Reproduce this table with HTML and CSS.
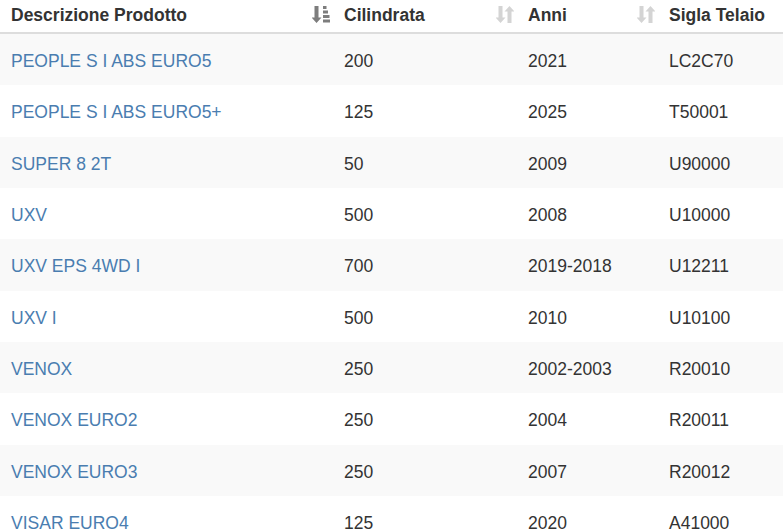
FILE: index.html
```html
<!DOCTYPE html>
<html lang="it">
<head>
<meta charset="utf-8">
<title>Prodotti</title>
<link rel="stylesheet" href="styles.css">
</head>
<body>
<table class="grid">
  <colgroup>
    <col class="c1"><col class="c2"><col class="c3"><col class="c4">
  </colgroup>
  <thead>
    <tr>
      <th><div class="th-in"><span>Descrizione Prodotto</span>
        <svg class="sort active" width="18" height="19" viewBox="0 0 18 19"><path d="M2.5 1h4v11.5h3l-5 5.5-5-5.5h3z" fill="#7d7d7d"/><rect x="11" y="1" width="3.5" height="3" fill="#7d7d7d"/><rect x="11" y="5.5" width="5" height="3" fill="#7d7d7d"/><rect x="11" y="10" width="6.5" height="3" fill="#7d7d7d"/><rect x="11" y="14.5" width="7" height="3" fill="#7d7d7d"/></svg>
      </div></th>
      <th><div class="th-in"><span>Cilindrata</span>
        <svg class="sort" width="18" height="19" viewBox="0 0 18 19"><path d="M2.5 1h4v11.5h3l-5 5.5-5-5.5h3z" fill="#d4d4d4"/><path d="M11.5 18h4V6.5h3l-5-5.5-5 5.5h3z" fill="#d4d4d4"/></svg>
      </div></th>
      <th><div class="th-in"><span>Anni</span>
        <svg class="sort" width="18" height="19" viewBox="0 0 18 19"><path d="M2.5 1h4v11.5h3l-5 5.5-5-5.5h3z" fill="#d4d4d4"/><path d="M11.5 18h4V6.5h3l-5-5.5-5 5.5h3z" fill="#d4d4d4"/></svg>
      </div></th>
      <th><div class="th-in"><span>Sigla Telaio</span></div></th>
    </tr>
  </thead>
  <tbody>
    <tr><td><a href="#">PEOPLE S I ABS EURO5</a></td><td>200</td><td>2021</td><td>LC2C70</td></tr>
    <tr><td><a href="#">PEOPLE S I ABS EURO5+</a></td><td>125</td><td>2025</td><td>T50001</td></tr>
    <tr><td><a href="#">SUPER 8 2T</a></td><td>50</td><td>2009</td><td>U90000</td></tr>
    <tr><td><a href="#">UXV</a></td><td>500</td><td>2008</td><td>U10000</td></tr>
    <tr><td><a href="#">UXV EPS 4WD I</a></td><td>700</td><td>2019-2018</td><td>U12211</td></tr>
    <tr><td><a href="#">UXV I</a></td><td>500</td><td>2010</td><td>U10100</td></tr>
    <tr><td><a href="#">VENOX</a></td><td>250</td><td>2002-2003</td><td>R20010</td></tr>
    <tr><td><a href="#">VENOX EURO2</a></td><td>250</td><td>2004</td><td>R20011</td></tr>
    <tr><td><a href="#">VENOX EURO3</a></td><td>250</td><td>2007</td><td>R20012</td></tr>
    <tr><td><a href="#">VISAR EURO4</a></td><td>125</td><td>2020</td><td>A41000</td></tr>
  </tbody>
</table>
</body>
</html>
```
FILE: styles.css
```css
html, body {
  margin: 0;
  padding: 0;
  background: #fff;
}
body {
  font-family: "Liberation Sans", Arial, sans-serif;
  font-size: 17.5px;
  color: #333;
}
.grid {
  border-collapse: collapse;
  table-layout: fixed;
  width: 783px;
}
.c1 { width: 333px; }
.c2 { width: 184px; }
.c3 { width: 141px; }
.c4 { width: 125px; }
.grid th {
  text-align: left;
  font-weight: bold;
  padding: 2.5px 3px 4.5px 11px;
  line-height: 25px;
  border-bottom: 2px solid #dddddd;
}
.th-in {
  display: flex;
  align-items: center;
  justify-content: space-between;
}
.sort {
  display: block;
  flex: none;
  margin-top: -2px;
}
.grid td {
  padding: 15px 10px 11.33px 11px;
  line-height: 25px;
  white-space: nowrap;
}
.grid tbody tr:nth-child(odd) td {
  background: #f9f9f9;
}
.grid a {
  color: #4a7db0;
  text-decoration: none;
}
```
